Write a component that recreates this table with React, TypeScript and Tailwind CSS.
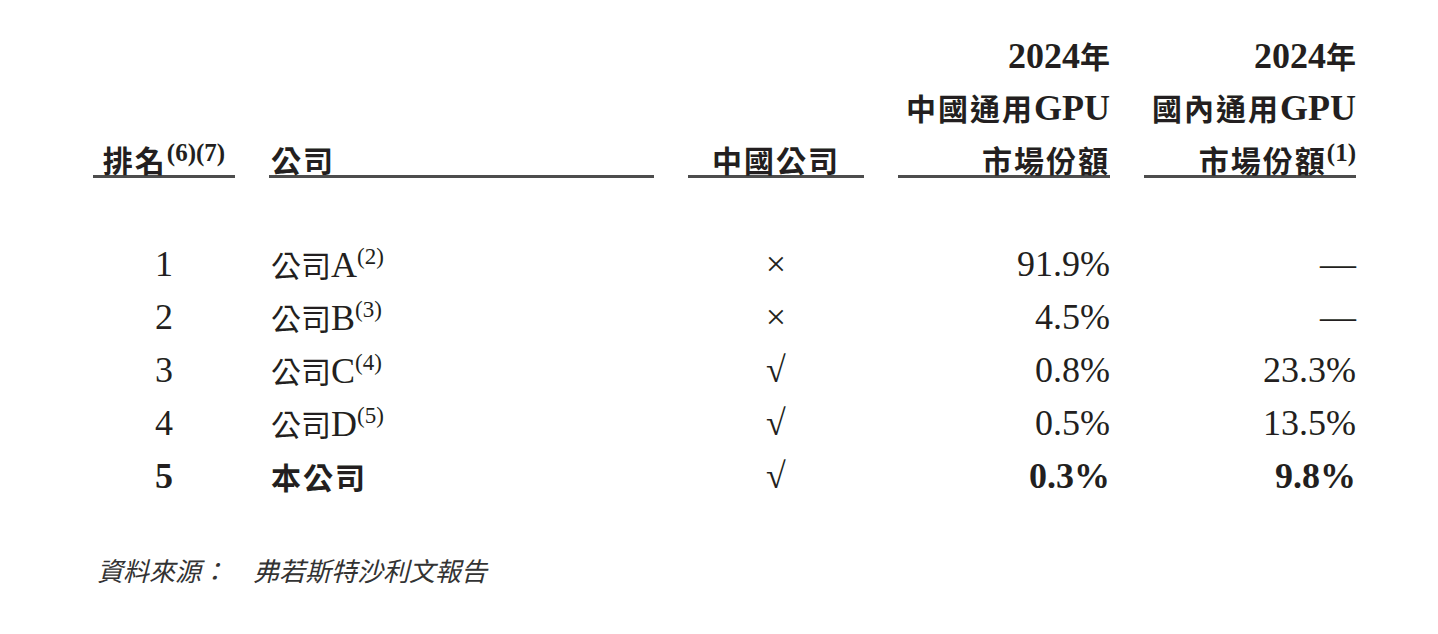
import React from "react";

const CJK = "font-['Noto_Sans_CJK_TC','Noto_Sans_CJK_SC',sans-serif] text-[30px]";
const CJKH = "font-['Noto_Sans_CJK_TC','Noto_Sans_CJK_SC',sans-serif] text-[30px] tracking-[2px]";
const GRID = "grid grid-cols-[142px_385px_176px_212px_212px] gap-x-[34px]";

function Sup({ children, bold = false }: { children: React.ReactNode; bold?: boolean }) {
  return (
    <span className={`${bold ? "text-[25px] font-bold align-[11px]" : "text-[23px] align-[13px]"} leading-none`}>
      {children}
    </span>
  );
}

function HeadLine({ children, last = false }: { children: React.ReactNode; last?: boolean }) {
  return <div className={`${last ? "h-[42px]" : "h-[52px]"} leading-[52px] whitespace-nowrap`}>{children}</div>;
}

const rows = [
  { rank: "1", name: "A", sup: "(2)", cn: "×", a: "91.9%", b: "—" },
  { rank: "2", name: "B", sup: "(3)", cn: "×", a: "4.5%", b: "—" },
  { rank: "3", name: "C", sup: "(4)", cn: "√", a: "0.8%", b: "23.3%" },
  { rank: "4", name: "D", sup: "(5)", cn: "√", a: "0.5%", b: "13.5%" },
];

export default function App() {
  return (
    <div className="min-h-[634px] w-[1438px] bg-white pl-[93px] pt-[29px] text-[36px] text-[#231f20] font-['Liberation_Serif','Noto_Sans_CJK_TC',serif]">
      {/* header */}
      <div className={`${GRID} font-bold`}>
        <div className="flex flex-col justify-end border-b-[3px] border-[#4d4d4d] text-center">
          <HeadLine last>
            <span className={CJKH}>排名</span>
            <Sup bold>(6)(7)</Sup>
          </HeadLine>
        </div>
        <div className="flex flex-col justify-end border-b-[3px] border-[#4d4d4d] pl-[2px]">
          <HeadLine last>
            <span className={CJKH}>公司</span>
          </HeadLine>
        </div>
        <div className="flex flex-col justify-end border-b-[3px] border-[#4d4d4d] text-center">
          <HeadLine last>
            <span className={CJKH}>中國公司</span>
          </HeadLine>
        </div>
        <div className="flex flex-col justify-end border-b-[3px] border-[#4d4d4d] text-right">
          <HeadLine>
            2024<span className={CJK}>年</span>
          </HeadLine>
          <HeadLine>
            <span className={CJKH}>中國通用</span>GPU
          </HeadLine>
          <HeadLine last>
            <span className={CJKH}>市場份額</span>
          </HeadLine>
        </div>
        <div className="flex flex-col justify-end border-b-[3px] border-[#4d4d4d] text-right">
          <HeadLine>
            2024<span className={CJK}>年</span>
          </HeadLine>
          <HeadLine>
            <span className={CJKH}>國內通用</span>GPU
          </HeadLine>
          <HeadLine last>
            <span className={CJKH}>市場份額</span>
            <Sup bold>(1)</Sup>
          </HeadLine>
        </div>
      </div>

      {/* body */}
      <div className="mt-[60px]">
        {rows.map((r) => (
          <div key={r.rank} className={`${GRID} h-[53px] leading-[53px] whitespace-nowrap`}>
            <div className="text-center">{r.rank}</div>
            <div className="pl-[2px]">
              <span className={CJK}>公司</span>
              {r.name}
              <Sup>{r.sup}</Sup>
            </div>
            <div className="text-center">{r.cn}</div>
            <div className="text-right">{r.a}</div>
            <div className="text-right">{r.b}</div>
          </div>
        ))}
        <div className={`${GRID} h-[53px] leading-[53px] whitespace-nowrap`}>
          <div className="text-center font-bold">5</div>
          <div className="pl-[2px] font-bold">
            <span className={CJKH}>本公司</span>
          </div>
          <div className="text-center">√</div>
          <div className="text-right font-bold">0.3%</div>
          <div className="text-right font-bold">9.8%</div>
        </div>
      </div>

      {/* footer */}
      <div className="mt-[47px] flex h-[40px] items-center pl-[4px] italic text-[26px] leading-[40px] text-[#333333] font-['Noto_Sans_CJK_TC','Noto_Sans_CJK_SC',sans-serif]">
        <span>資料來源：</span>
        <span className="ml-[26px]">弗若斯特沙利文報告</span>
      </div>
    </div>
  );
}
